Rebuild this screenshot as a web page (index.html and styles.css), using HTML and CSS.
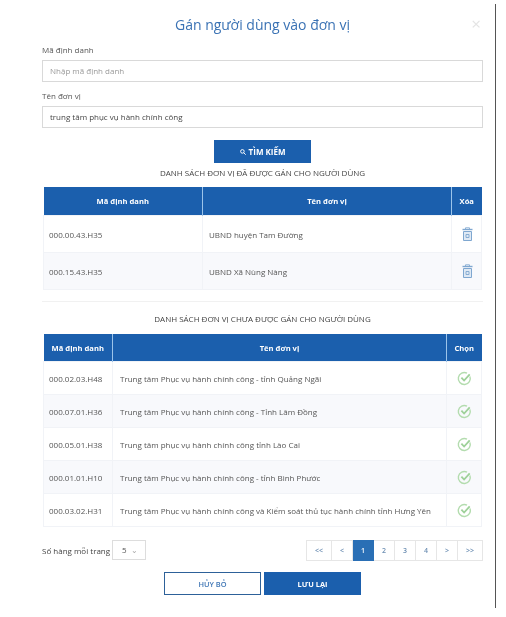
FILE: index.html
```html
<!DOCTYPE html>
<html lang="vi">
<head>
  <meta charset="UTF-8">
  <title>Gán người dùng vào đơn vị</title>
  <link rel="stylesheet" href="styles.css">
</head>
<body>
  <div class="modal">
    <h2 class="title">Gán người dùng vào đơn vị</h2>
    <span class="close">&times;</span>

    <label class="field-label">Mã định danh</label>
    <div class="input placeholder">Nhập mã định danh</div>
    <label class="field-label second">Tên đơn vị</label>
    <div class="input">trung tâm phục vụ hành chính công</div>

    <div class="center"><button class="btn btn-primary btn-search">
      <svg width="6" height="6" viewBox="0 0 10 10"><circle cx="4" cy="4" r="3" fill="none" stroke="#fff" stroke-width="1.6"/><path d="M6.2 6.2L9.5 9.5" stroke="#fff" stroke-width="1.6"/></svg>
      TÌM KIẾM</button></div>

    <div class="list-title first">DANH SÁCH ĐƠN VỊ ĐÃ ĐƯỢC GÁN CHO NGƯỜI DÙNG</div>
    <table class="grid grid-assigned">
      <colgroup><col class="c1"><col><col class="c3"></colgroup>
      <thead><tr><th>Mã định danh</th><th>Tên đơn vị</th><th>Xóa</th></tr></thead>
      <tbody>
        <tr>
          <td>000.00.43.H35</td><td>UBND huyện Tam Đường</td>
          <td class="ico"><svg width="11" height="14" viewBox="0 0 11 14"><path d="M3.5 2V.8h4V2" fill="none" stroke="#8fb2d6"/><path d="M.5 2.5h10" stroke="#7fa7d0" stroke-width="1.4"/><path d="M1.5 4.5h8v9h-8z" fill="#dfe9f4" stroke="#7fa7d0"/><path d="M4 7.5h3v3H4z" fill="none" stroke="#7fa7d0" stroke-width=".9"/></svg></td>
        </tr>
        <tr>
          <td>000.15.43.H35</td><td>UBND Xã Nùng Nàng</td>
          <td class="ico"><svg width="11" height="14" viewBox="0 0 11 14"><path d="M3.5 2V.8h4V2" fill="none" stroke="#8fb2d6"/><path d="M.5 2.5h10" stroke="#7fa7d0" stroke-width="1.4"/><path d="M1.5 4.5h8v9h-8z" fill="#dfe9f4" stroke="#7fa7d0"/><path d="M4 7.5h3v3H4z" fill="none" stroke="#7fa7d0" stroke-width=".9"/></svg></td>
        </tr>
      </tbody>
    </table>

    <hr class="divider">

    <div class="list-title">DANH SÁCH ĐƠN VỊ CHƯA ĐƯỢC GÁN CHO NGƯỜI DÙNG</div>
    <table class="grid grid-free">
      <colgroup><col class="c1"><col><col class="c3"></colgroup>
      <thead><tr><th>Mã định danh</th><th>Tên đơn vị</th><th>Chọn</th></tr></thead>
      <tbody>
        <tr><td>000.02.03.H48</td><td>Trung tâm Phục vụ hành chính công - tỉnh Quảng Ngãi</td><td class="ico"><svg width="15" height="15" viewBox="0 0 15 15"><path d="M12.9 5.4A6 6 0 1 1 10 2.2" fill="none" stroke="#b3dcae" stroke-width="1.4"/><path d="M4.4 6.6l2.7 2.9 5.6-6.2" fill="none" stroke="#9ed199" stroke-width="1.8"/></svg></td></tr>
        <tr><td>000.07.01.H36</td><td>Trung tâm Phục vụ hành chính công - Tỉnh Lâm Đồng</td><td class="ico"><svg width="15" height="15" viewBox="0 0 15 15"><path d="M12.9 5.4A6 6 0 1 1 10 2.2" fill="none" stroke="#b3dcae" stroke-width="1.4"/><path d="M4.4 6.6l2.7 2.9 5.6-6.2" fill="none" stroke="#9ed199" stroke-width="1.8"/></svg></td></tr>
        <tr><td>000.05.01.H38</td><td>Trung tâm phục vụ hành chính công tỉnh Lào Cai</td><td class="ico"><svg width="15" height="15" viewBox="0 0 15 15"><path d="M12.9 5.4A6 6 0 1 1 10 2.2" fill="none" stroke="#b3dcae" stroke-width="1.4"/><path d="M4.4 6.6l2.7 2.9 5.6-6.2" fill="none" stroke="#9ed199" stroke-width="1.8"/></svg></td></tr>
        <tr><td>000.01.01.H10</td><td>Trung tâm Phục vụ hành chính công - tỉnh Bình Phước</td><td class="ico"><svg width="15" height="15" viewBox="0 0 15 15"><path d="M12.9 5.4A6 6 0 1 1 10 2.2" fill="none" stroke="#b3dcae" stroke-width="1.4"/><path d="M4.4 6.6l2.7 2.9 5.6-6.2" fill="none" stroke="#9ed199" stroke-width="1.8"/></svg></td></tr>
        <tr><td>000.03.02.H31</td><td>Trung tâm Phục vụ hành chính công và Kiểm soát thủ tục hành chính tỉnh Hưng Yên</td><td class="ico"><svg width="15" height="15" viewBox="0 0 15 15"><path d="M12.9 5.4A6 6 0 1 1 10 2.2" fill="none" stroke="#b3dcae" stroke-width="1.4"/><path d="M4.4 6.6l2.7 2.9 5.6-6.2" fill="none" stroke="#9ed199" stroke-width="1.8"/></svg></td></tr>
      </tbody>
    </table>

    <div class="paging">
      <span class="page-size-label">Số hàng mỗi trang</span>
      <div class="page-size">5 <span class="caret">&#8964;</span></div>
      <div class="pager">
        <a class="first">&lt;&lt;</a><a>&lt;</a><a class="active">1</a><a>2</a><a>3</a><a>4</a><a>&gt;</a><a class="wide">&gt;&gt;</a>
      </div>
    </div>

    <div class="actions">
      <button class="btn btn-outline">HỦY BỎ</button>
      <button class="btn btn-primary">LƯU LẠI</button>
    </div>
  </div>
</body>
</html>
```

FILE: styles.css
```css
html, body { margin: 0; background: #fff; }
body { font-family: "Open Sans", sans-serif; font-size: 8px; color: #555; }

.modal { position: relative; box-sizing: border-box; width: 496px; height: 604px; margin-top: 4px; padding: 10px 12px 0 42px; border-right: 1px solid #555; filter: blur(0.45px); }
.title { margin: 0; text-align: center; font-size: 14px; line-height: 22px; font-weight: 500; color: #3a72b4; }
.close { position: absolute; top: 9px; right: 14px; font-size: 17px; line-height: 22px; color: #e4e4e4; }

.field-label { display: block; margin-top: 9px; margin-bottom: 5px; line-height: 10px; color: #555; }
.field-label.second { margin-top: 9px; }
.input { box-sizing: border-box; height: 22px; padding-left: 7px; line-height: 20px; border: 1px solid #d9d9d9; color: #444; }
.input.placeholder { color: #999; }

.center { text-align: center; margin-top: 12px; }
.btn { box-sizing: border-box; width: 97px; height: 23px; padding: 0; border: 0; font-family: inherit; font-size: 7.4px; font-weight: 700; cursor: pointer; }
.btn-primary { background: #1b5fad; color: #fff; }
.btn-outline { background: #fff; color: #3f76b5; font-weight: 600; border: 1px solid #2d6199; }
.btn-search { font-size: 8px; }
.btn-search svg { vertical-align: 0; margin-right: 1px; }

.list-title { text-align: center; line-height: 10px; margin-top: 12px; color: #444; }
.list-title.first { margin-top: 5px; }

.grid { width: 439px; margin: 9px 1px 0; border-collapse: collapse; table-layout: fixed; }
.grid th { height: 28px; padding: 0; background: #1b5fad; color: #fff; font-size: 7.6px; font-weight: 700; border-left: 1px solid #9cc4ea; }
.grid th:first-child { border-left: 0; }
.grid td { padding: 0 6px; border: 1px solid #f1f3f7; color: #555; white-space: nowrap; }
.grid td:first-child { padding-left: 5px; }
.grid tbody tr:nth-child(even) td { background: #f8f9fc; }
.grid td.ico { padding: 0 0 0 1px; text-align: center; }
.grid svg { display: inline-block; vertical-align: middle; }

.grid-assigned .c1 { width: 159px; }
.grid-assigned .c3 { width: 30px; }
.grid-assigned td { height: 36px; }
.grid-free { margin-top: 10px; }
.grid-free .c1 { width: 69px; }
.grid-free .c3 { width: 35px; }
.grid-free th { height: 27px; }
.grid-free td { height: 32px; padding-left: 7px; }
.grid-free td:first-child { padding-left: 5px; }

.divider { margin: 11px 0 0; border: 0; border-top: 1px solid #f1f1f1; }

.paging { display: flex; align-items: center; height: 20px; margin-top: 13px; }
.page-size-label { width: 70px; white-space: nowrap; color: #444; }
.page-size { box-sizing: border-box; display: flex; justify-content: space-between; width: 34px; height: 20px; padding: 0 7px 0 9px; line-height: 18px; border: 1px solid #ddd; }
.caret { color: #aaa; }
.pager { display: flex; margin-left: auto; }
.pager a { box-sizing: border-box; width: 21px; height: 21px; line-height: 19px; font-size: 7px; text-align: center; border: 1px solid #e6e6e6; border-left-width: 0; color: #6d8fb3; font-weight: 600; }
.pager a.first { width: 26px; border-left-width: 1px; }
.pager a.wide { width: 25px; }
.pager a.active { background: #2a6fb5; color: #fff; border-color: #2a6fb5; }

.actions { display: flex; justify-content: center; gap: 3px; margin-top: 12px; }
```
